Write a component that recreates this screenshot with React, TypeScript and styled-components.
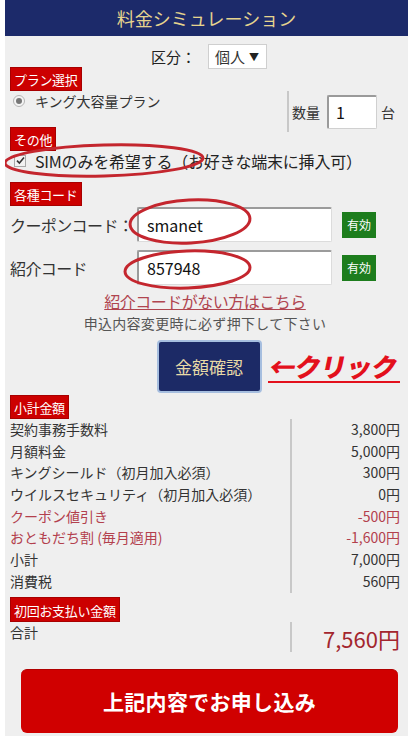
import React, { FC } from "react";
import styled, { createGlobalStyle } from "styled-components";

const GlobalStyle = createGlobalStyle`
  html, body {
    margin: 0;
    padding: 0;
    background: #ffffff;
  }
  body {
    font-family: "Noto Sans CJK JP", "Noto Sans", sans-serif;
    color: #222;
  }
  * {
    box-sizing: border-box;
  }
`;

const Panel = styled.div`
  margin-left: 5px;
  width: 403px;
  min-height: 100vh;
  background: #efefef;
  overflow: hidden;
`;

const Header = styled.div`
  height: 36px;
  background: #1c2a6a;
  color: #e6d48e;
  font-size: 18px;
  display: flex;
  align-items: center;
  justify-content: center;
`;

const Content = styled.div`
  padding: 0 8px 0 5px;
`;

const KubunRow = styled.div`
  margin-top: 8px;
  height: 25px;
  display: flex;
  align-items: center;
  justify-content: center;
  gap: 12px;
  font-size: 15px;
  padding-left: 8px;
`;

const Select = styled.div`
  width: 59px;
  height: 25px;
  background: #fff;
  border: 1px solid #cfcfcf;
  display: flex;
  align-items: center;
  gap: 4px;
  padding-left: 6px;
  font-size: 15px;
  color: #333;

  span {
    font-size: 10px;
    color: #222;
  }
`;

const Tag = styled.div<{ $h?: number }>`
  width: fit-content;
  height: ${({ $h }) => $h ?? 24}px;
  line-height: ${({ $h }) => $h ?? 24}px;
  padding: 0 3px;
  background: #cc0000;
  color: #fff;
  font-size: 13px;
  border: 1px solid #a80000;
  letter-spacing: -0.3px;
`;

const PlanSection = styled.div`
  display: flex;
  justify-content: space-between;
  margin-top: -2px;
`;

const PlanLeft = styled.div`
  display: flex;
  flex-direction: column;
`;

const RadioLine = styled.div`
  height: 20px;
  display: flex;
  align-items: center;
  gap: 10px;
  padding-left: 3px;
  font-size: 14px;
  color: #333;
`;

const Radio = styled.span`
  width: 12px;
  height: 12px;
  border-radius: 50%;
  border: 1px solid #b5b5b5;
  background: #f4f4f4;
  display: flex;
  align-items: center;
  justify-content: center;

  &:after {
    content: "";
    width: 6px;
    height: 6px;
    border-radius: 50%;
    background: #777;
  }
`;

const QtyBox = styled.div`
  margin-top: 24px;
  margin-bottom: -5px;
  margin-right: 5px;
  height: 41px;
  border-left: 2px solid #c8c8c8;
  padding-left: 3px;
  display: flex;
  align-items: center;
  gap: 7px;
  font-size: 14px;
  color: #333;
`;

const QtyInput = styled.div`
  width: 50px;
  height: 34px;
  margin-right: -3px;
  background: #fff;
  border: 1px solid #d0d0d0;
  border-top: 2px solid #9a9a9a;
  border-left: 2px solid #9a9a9a;
  border-radius: 2px;
  display: flex;
  align-items: center;
  padding-left: 7px;
  font-size: 16px;
  color: #111;
`;

const CheckRow = styled.div`
  position: relative;
  height: 19px;
  display: flex;
  align-items: center;
  gap: 9px;
  padding-left: 4px;
  font-size: 16px;
  color: #222;
  letter-spacing: -0.2px;
`;

const CheckBox = styled.span`
  width: 12px;
  height: 12px;
  border: 1px solid #a8a8a8;
  background: #f2f2f2;
  display: flex;
  align-items: center;
  justify-content: center;
`;

const Annotation = styled.svg<{ $left: number; $top: number; $w: number; $h: number }>`
  position: absolute;
  left: ${({ $left }) => $left}px;
  top: ${({ $top }) => $top}px;
  width: ${({ $w }) => $w}px;
  height: ${({ $h }) => $h}px;
  overflow: visible;
  pointer-events: none;
`;

const CodeTag = styled(Tag)`
  margin-top: 12px;
`;

const CodeRow = styled.div<{ $gap: number }>`
  margin-top: ${({ $gap }) => $gap}px;
  display: grid;
  grid-template-columns: 127px 195px auto;
  align-items: center;
`;

const CodeLabel = styled.div`
  font-size: 16px;
  color: #333;
  white-space: nowrap;
  letter-spacing: -0.6px;
`;

const CodeInputWrap = styled.div`
  position: relative;
  height: 35px;
`;

const CodeInput = styled.div`
  height: 35px;
  background: #fff;
  border: 1px solid #dcdcdc;
  border-top: 2px solid #9b9b9b;
  border-left: 2px solid #9b9b9b;
  border-radius: 2px;
  display: flex;
  align-items: center;
  padding-left: 8px;
  font-size: 16px;
  color: #111;
`;

const ValidButton = styled.div`
  margin-left: 10px;
  width: 34px;
  height: 26px;
  background: #1d7d1d;
  color: #fff;
  font-size: 12px;
  display: flex;
  align-items: center;
  justify-content: center;
`;

const LinkText = styled.div`
  margin-top: 6px;
  text-align: center;
  font-size: 16px;
  line-height: 20px;
  color: #b0454f;
  text-decoration: underline;
  letter-spacing: -0.5px;
`;

const Note = styled.div`
  margin-top: 3px;
  text-align: center;
  font-size: 14px;
  line-height: 18px;
  color: #555;
  letter-spacing: 0.3px;
`;

const ButtonRow = styled.div`
  margin-top: 8px;
  display: grid;
  grid-template-columns: 1fr 105px 1fr;
  align-items: center;
`;

const ConfirmButton = styled.div`
  grid-column: 2;
  margin-left: 4px;
  width: 105px;
  height: 53px;
  background: #1c2a66;
  border: 2px solid #a6bedf;
  border-radius: 4px;
  color: #e8daa6;
  font-size: 17px;
  display: flex;
  align-items: center;
  justify-content: center;
`;

const ClickLabel = styled.div`
  margin-left: 10px;
  color: #e3101c;
  font-size: 26px;
  font-weight: 900;
  line-height: 30px;
  border-bottom: 2px solid #e3101c;
  text-align: center;
  white-space: nowrap;
  letter-spacing: -0.5px;

  span {
    display: inline-block;
    transform: skewX(-12deg);
  }
`;

const SubTag = styled(Tag)`
  margin-top: 2px;
`;

const Breakdown = styled.div`
  display: flex;
  padding-bottom: 4px;
`;

const BreakdownCol = styled.div<{ $right?: boolean }>`
  flex: ${({ $right }) => ($right ? "0 0 110px" : "1")};
  border-left: ${({ $right }) => ($right ? "2px solid #c8c8c8" : "none")};
  text-align: ${({ $right }) => ($right ? "right" : "left")};
`;

const Line = styled.div<{ $discount?: boolean }>`
  height: 21.7px;
  line-height: 21.7px;
  font-size: 14px;
  white-space: nowrap;
  color: ${({ $discount }) => ($discount ? "#b3404d" : "#333")};
`;

const TotalRow = styled.div`
  display: flex;
`;

const TotalLabel = styled.div`
  flex: 1;
  font-size: 14px;
  line-height: 20px;
  color: #333;
`;

const TotalAmount = styled.div`
  flex: 0 0 110px;
  height: 30px;
  border-left: 2px solid #c8c8c8;
  text-align: right;
  font-size: 22px;
  line-height: 30px;
  padding-top: 1px;
  color: #a3262e;
`;

const ApplyButton = styled.div`
  margin: 17px 2px 0 11px;
  height: 64px;
  background: #d00000;
  border-top: 1px solid #b00000;
  border-radius: 6px;
  color: #fff;
  font-size: 21px;
  font-weight: 700;
  display: flex;
  align-items: center;
  justify-content: center;
  letter-spacing: 0.3px;
`;

const Ring: FC<{ left: number; top: number; w: number; h: number; tilt?: number }> = ({
  left,
  top,
  w,
  h,
  tilt = 0,
}) => (
  <Annotation $left={left} $top={top} $w={w} $h={h} viewBox={`0 0 ${w} ${h}`}>
    <ellipse
      cx={w / 2}
      cy={h / 2}
      rx={w / 2 - 2}
      ry={h / 2 - 2}
      fill="none"
      stroke="#c4262e"
      strokeWidth={3}
      transform={`rotate(${tilt} ${w / 2} ${h / 2})`}
    />
  </Annotation>
);

const breakdown = [
  { label: "契約事務手数料", amount: "3,800円" },
  { label: "月額料金", amount: "5,000円" },
  { label: "キングシールド（初月加入必須）", amount: "300円" },
  { label: "ウイルスセキュリティ（初月加入必須）", amount: "0円" },
  { label: "クーポン値引き", amount: "-500円", discount: true },
  { label: "おともだち割 (毎月適用)", amount: "-1,600円", discount: true },
  { label: "小計", amount: "7,000円" },
  { label: "消費税", amount: "560円" },
];

const App: FC = () => {
  return (
    <>
      <GlobalStyle />
      <Panel>
        <Header>料金シミュレーション</Header>
        <Content>
          <KubunRow>
            区分：
            <Select>
              個人 <span>▼</span>
            </Select>
          </KubunRow>

          <PlanSection>
            <PlanLeft>
              <Tag>プラン選択</Tag>
              <RadioLine>
                <Radio />
                キング大容量プラン
              </RadioLine>
            </PlanLeft>
            <QtyBox>
              数量
              <QtyInput>1</QtyInput>
              台
            </QtyBox>
          </PlanSection>

          <Tag>その他</Tag>
          <CheckRow>
            <CheckBox>
              <svg width="9" height="9" viewBox="0 0 9 9">
                <path d="M1 4.6 L3.4 7 L8 1.6" fill="none" stroke="#333" strokeWidth="1.6" />
              </svg>
            </CheckBox>
            SIMのみを希望する（お好きな端末に挿入可）
            <Ring left={-7} top={-8} w={202} h={35} tilt={-1.5} />
          </CheckRow>

          <CodeTag>各種コード</CodeTag>
          <CodeRow $gap={1}>
            <CodeLabel>クーポンコード：</CodeLabel>
            <CodeInputWrap>
              <CodeInput>smanet</CodeInput>
              <Ring left={-9} top={-9} w={124} h={47} tilt={-3} />
            </CodeInputWrap>
            <ValidButton>有効</ValidButton>
          </CodeRow>
          <CodeRow $gap={8}>
            <CodeLabel>紹介コード</CodeLabel>
            <CodeInputWrap>
              <CodeInput>857948</CodeInput>
              <Ring left={-14} top={-1} w={129} h={41} tilt={-2} />
            </CodeInputWrap>
            <ValidButton>有効</ValidButton>
          </CodeRow>

          <LinkText>紹介コードがない方はこちら</LinkText>
          <Note>申込内容変更時に必ず押下して下さい</Note>

          <ButtonRow>
            <ConfirmButton>金額確認</ConfirmButton>
            <ClickLabel>
              <span>←クリック</span>
            </ClickLabel>
          </ButtonRow>

          <SubTag>小計金額</SubTag>
          <Breakdown>
            <BreakdownCol>
              {breakdown.map((row, i) => (
                <Line key={i} $discount={row.discount}>
                  {row.label}
                </Line>
              ))}
            </BreakdownCol>
            <BreakdownCol $right>
              {breakdown.map((row, i) => (
                <Line key={i} $discount={row.discount}>
                  {row.amount}
                </Line>
              ))}
            </BreakdownCol>
          </Breakdown>

          <Tag $h={25}>初回お支払い金額</Tag>
          <TotalRow>
            <TotalLabel>合計</TotalLabel>
            <TotalAmount>7,560円</TotalAmount>
          </TotalRow>

          <ApplyButton>上記内容でお申し込み</ApplyButton>
        </Content>
      </Panel>
    </>
  );
};

export default App;
